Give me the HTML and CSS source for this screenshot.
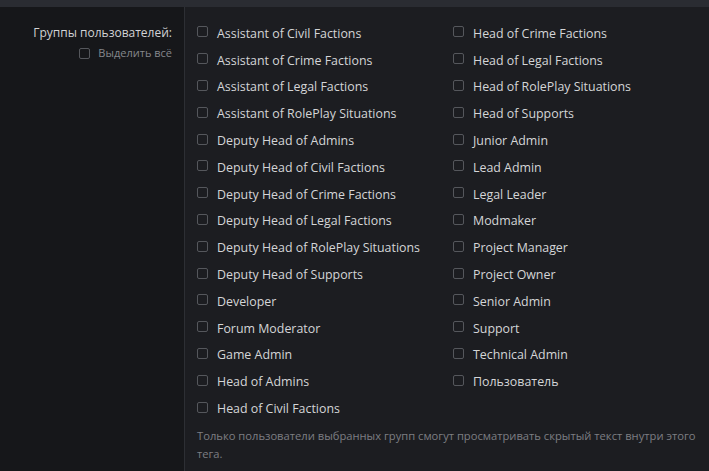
FILE: index.html
```html
<!DOCTYPE html>
<html lang="ru">
<head>
  <meta charset="UTF-8" />
  <meta name="viewport" content="width=device-width, initial-scale=1.0" />
  <title>Группы пользователей</title>
  <link rel="stylesheet" href="styles.css">
</head>
<body>
  <div class="topbar"></div>

  <div class="form-row">
    <div class="form-label">
      <label class="label-title">Группы пользователей:</label>
      <label class="select-all">
        <input type="checkbox" />
        Выделить всё
      </label>
    </div>

    <div class="form-input">
      <div class="group-list">
        <label class="group"><input type="checkbox" /> Assistant of Civil Factions</label>
        <label class="group"><input type="checkbox" /> Assistant of Crime Factions</label>
        <label class="group"><input type="checkbox" /> Assistant of Legal Factions</label>
        <label class="group"><input type="checkbox" /> Assistant of RolePlay Situations</label>
        <label class="group"><input type="checkbox" /> Deputy Head of Admins</label>
        <label class="group"><input type="checkbox" /> Deputy Head of Civil Factions</label>
        <label class="group"><input type="checkbox" /> Deputy Head of Crime Factions</label>
        <label class="group"><input type="checkbox" /> Deputy Head of Legal Factions</label>
        <label class="group"><input type="checkbox" /> Deputy Head of RolePlay Situations</label>
        <label class="group"><input type="checkbox" /> Deputy Head of Supports</label>
        <label class="group"><input type="checkbox" /> Developer</label>
        <label class="group"><input type="checkbox" /> Forum Moderator</label>
        <label class="group"><input type="checkbox" /> Game Admin</label>
        <label class="group"><input type="checkbox" /> Head of Admins</label>
        <label class="group"><input type="checkbox" /> Head of Civil Factions</label>
        <label class="group"><input type="checkbox" /> Head of Crime Factions</label>
        <label class="group"><input type="checkbox" /> Head of Legal Factions</label>
        <label class="group"><input type="checkbox" /> Head of RolePlay Situations</label>
        <label class="group"><input type="checkbox" /> Head of Supports</label>
        <label class="group"><input type="checkbox" /> Junior Admin</label>
        <label class="group"><input type="checkbox" /> Lead Admin</label>
        <label class="group"><input type="checkbox" /> Legal Leader</label>
        <label class="group"><input type="checkbox" /> Modmaker</label>
        <label class="group"><input type="checkbox" /> Project Manager</label>
        <label class="group"><input type="checkbox" /> Project Owner</label>
        <label class="group"><input type="checkbox" /> Senior Admin</label>
        <label class="group"><input type="checkbox" /> Support</label>
        <label class="group"><input type="checkbox" /> Technical Admin</label>
        <label class="group"><input type="checkbox" /> Пользователь</label>
      </div>

      <div class="hint">Только пользователи выбранных групп смогут просматривать скрытый текст внутри этого тега.</div>
    </div>
  </div>
</body>
</html>
```

FILE: styles.css
```css
body {
  margin: 0;
  background-color: #1c1d21;
  font-family: 'Open Sans', 'Noto Sans', sans-serif;
  font-size: 12.4px;
  color: #d4d5d7;
}

.topbar {
  height: 7px;
  background-color: #2a2c32;
}

.form-row {
  display: grid;
  grid-template-columns: 185px 1fr;
  min-height: 464px;
}

.form-label {
  background-color: #16171a;
  border-right: 1px solid #2d2f34;
  padding: 13px 12px 0 0;
  display: flex;
  flex-direction: column;
  align-items: flex-end;
}

.label-title {
  font-size: 12px;
  line-height: 26px;
  color: #d2d3d5;
}

.select-all {
  display: flex;
  align-items: center;
  gap: 8px;
  font-size: 11px;
  color: #85878c;
  line-height: 14px;
}

input[type="checkbox"] {
  appearance: none;
  width: 11px;
  height: 11px;
  margin: 0;
  border: 1px solid #55575c;
  border-radius: 2px;
  background: transparent;
  box-sizing: border-box;
}

.form-input {
  padding: 13px 0 0 12px;
}

.group-list {
  display: grid;
  grid-auto-flow: column;
  grid-template-rows: repeat(15, 26.8px);
  grid-template-columns: 256px 1fr;
}

.group {
  display: flex;
  align-items: center;
  gap: 9px;
  white-space: nowrap;
}

.group input {
  margin-top: -3px;
}

.hint {
  margin-top: 5px;
  font-size: 11.2px;
  line-height: 18px;
  color: #7c7e83;
}
```
